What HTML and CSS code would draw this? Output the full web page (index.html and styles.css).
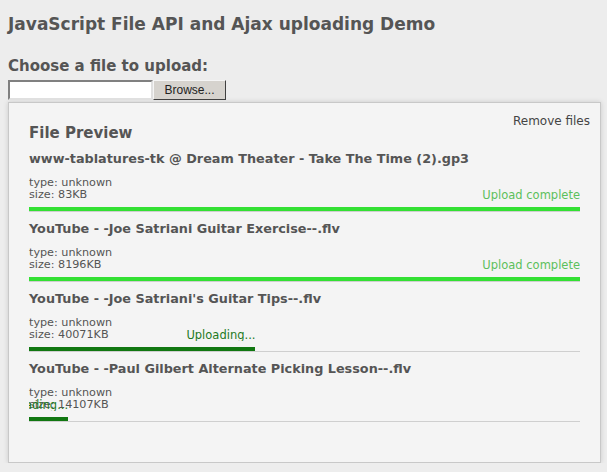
FILE: index.html
```html
<!DOCTYPE html>
<html>
<head>
<meta charset="utf-8">
<title>JavaScript File API and Ajax uploading Demo</title>
<link rel="stylesheet" href="styles.css">
</head>
<body>
<h1 class="title">JavaScript File API and Ajax uploading Demo</h1>
<label class="choose">Choose a file to upload:</label>
<div class="file-input">
  <span class="file-field"></span>
  <span class="browse">Browse...</span>
</div>
<div class="panel">
  <div class="panel-head">
    <h2 class="panel-title">File Preview</h2>
    <span class="remove">Remove files</span>
  </div>
  <div class="item">
    <div class="name">www-tablatures-tk @ Dream Theater - Take The Time (2).gp3</div>
    <div class="meta-row">
      <div class="meta">type: unknown<br>size: 83KB</div>
      <div class="status done" style="width:100%"><span>Upload complete</span></div>
    </div>
    <div class="track"><div class="bar done" style="width:100%"></div></div>
  </div>
  <div class="item">
    <div class="name">YouTube - -Joe Satriani Guitar Exercise--.flv</div>
    <div class="meta-row">
      <div class="meta">type: unknown<br>size: 8196KB</div>
      <div class="status done" style="width:100%"><span>Upload complete</span></div>
    </div>
    <div class="track"><div class="bar done" style="width:100%"></div></div>
  </div>
  <div class="item">
    <div class="name">YouTube - -Joe Satriani's Guitar Tips--.flv</div>
    <div class="meta-row">
      <div class="meta">type: unknown<br>size: 40071KB</div>
      <div class="status" style="width:41.1%"><span>Uploading...</span></div>
    </div>
    <div class="track"><div class="bar" style="width:41.1%"></div></div>
  </div>
  <div class="item">
    <div class="name">YouTube - -Paul Gilbert Alternate Picking Lesson--.flv</div>
    <div class="meta-row">
      <div class="meta">type: unknown<br>size: 14107KB</div>
      <div class="status" style="width:7.1%"><span>Uploading...</span></div>
    </div>
    <div class="track"><div class="bar" style="width:7.1%"></div></div>
  </div>
</div>
</body>
</html>
```
FILE: styles.css
```css
html, body {
  margin: 0;
  padding: 0;
  background: #ededed;
}
body {
  padding: 0 8px 0 8px;
  font-family: "DejaVu Sans", Verdana, sans-serif;
  color: #555;
}
.title {
  margin: 0;
  padding-top: 13px;
  font-size: 17px;
  line-height: 22px;
  font-weight: bold;
  color: #555;
}
.choose {
  display: block;
  margin-top: 22px;
  font-size: 15px;
  line-height: 18px;
  font-weight: bold;
  color: #555;
}
.file-input {
  display: flex;
  height: 20px;
  margin-top: 5px;
}
.file-field {
  width: 141px;
  height: 16px;
  background: #fff;
  border: 2px solid;
  border-color: #808080 #e0e0e0 #e0e0e0 #808080;
}
.browse {
  width: 71px;
  height: 18px;
  background: #d6d3ce;
  border: 1px solid;
  border-color: #f5f5f5 #404040 #404040 #f5f5f5;
  font-family: "Liberation Sans", Arial, sans-serif;
  font-size: 12px;
  line-height: 18px;
  text-align: center;
  color: #222;
}
.panel {
  width: 571px;
  margin-top: 2px;
  padding: 10px 10px 40px 10px;
  background: #f4f4f4;
  border: 1px solid #c8c8c8;
  box-shadow: 0 0 5px rgba(0,0,0,0.15);
}
.panel-head {
  display: flex;
  justify-content: space-between;
  align-items: flex-start;
  padding-left: 10px;
}
.panel-title {
  margin: 11px 0 0 0;
  font-size: 15px;
  line-height: 18px;
  font-weight: bold;
  color: #555;
}
.remove {
  font-size: 12px;
  line-height: 14px;
  color: #444;
  margin-top: 1px;
}
.item {
  padding: 8px 10px 0 10px;
}
.name {
  font-size: 12.8px;
  line-height: 18px;
  font-weight: bold;
  color: #555;
  white-space: nowrap;
}
.meta-row {
  display: grid;
  margin-top: 9px;
}
.meta-row > * {
  grid-area: 1 / 1;
}
.meta {
  font-size: 11.2px;
  line-height: 12px;
  color: #555;
}
.status {
  align-self: end;
  justify-self: start;
  display: flex;
  justify-content: flex-end;
  overflow: hidden;
  white-space: nowrap;
  font-size: 11.5px;
  line-height: 12px;
  color: #1e7a1e;
}
.status > span {
  flex: none;
}
.status.done {
  color: #5cc05c;
}
.track {
  margin-top: 6px;
  height: 4px;
  border-bottom: 1px solid #cfcfcf;
}
.bar {
  height: 4px;
  background: #117711;
}
.bar.done {
  background: #33e033;
}
```
